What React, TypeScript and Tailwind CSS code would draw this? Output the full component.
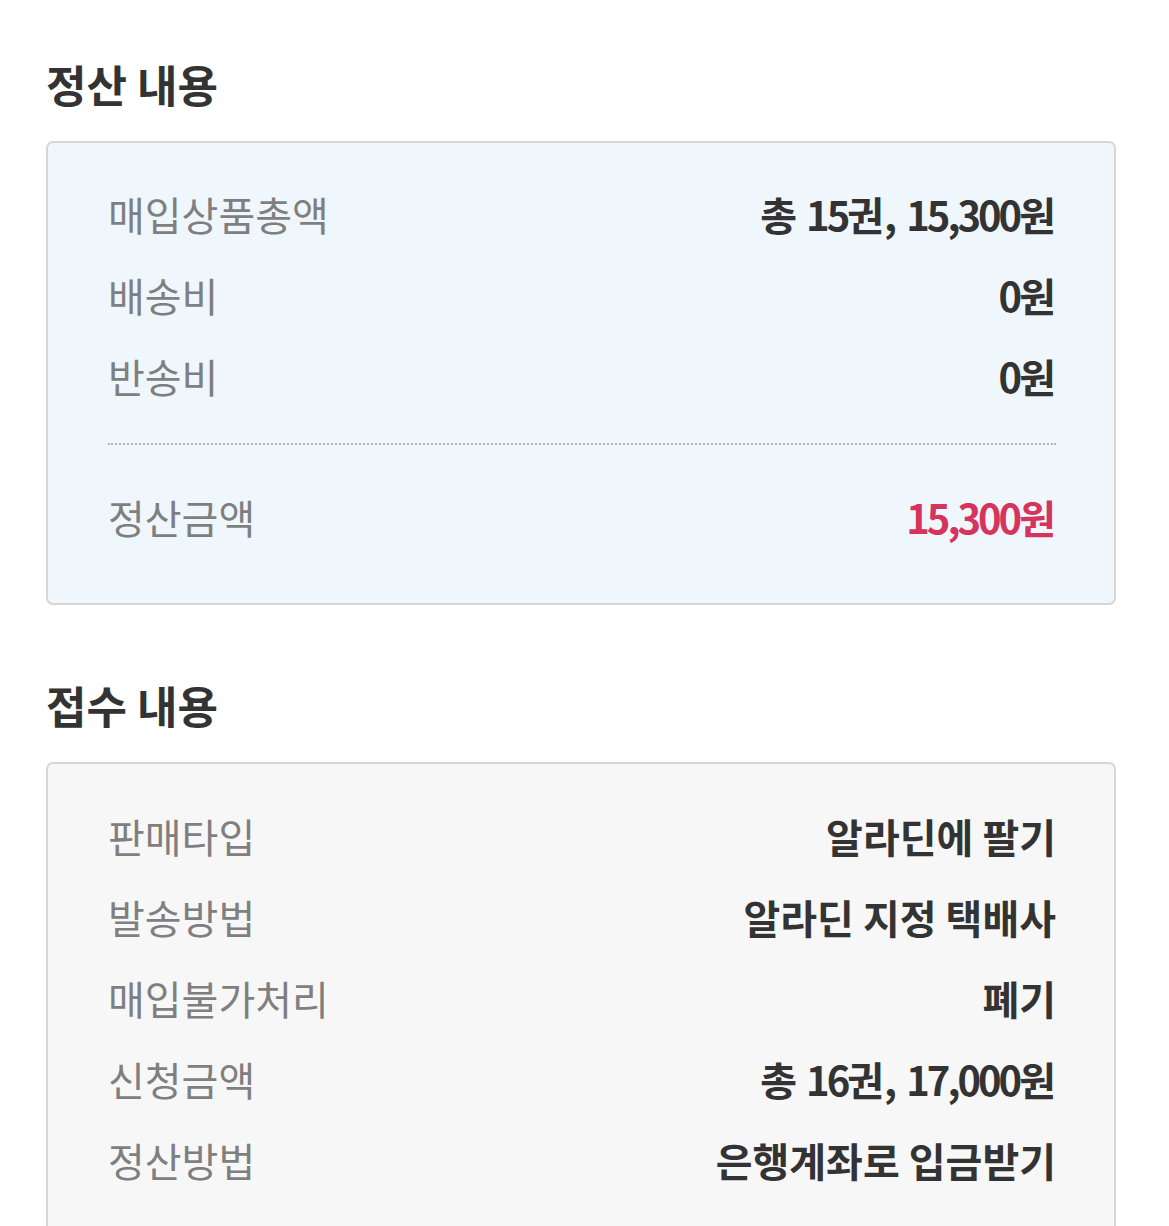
const font = { fontFamily: '"Noto Sans CJK KR", "Noto Sans", sans-serif' };

type Row = { label: string; value: string };

const settle: Row[] = [
  { label: '매입상품총액', value: '총 15권, 15,300원' },
  { label: '배송비', value: '0원' },
  { label: '반송비', value: '0원' },
];

const receipt: Row[] = [
  { label: '판매타입', value: '알라딘에 팔기' },
  { label: '발송방법', value: '알라딘 지정 택배사' },
  { label: '매입불가처리', value: '폐기' },
  { label: '신청금액', value: '총 16권, 17,000원' },
  { label: '정산방법', value: '은행계좌로 입금받기' },
];

// digits in the original font are narrow, so squeeze number runs a bit
function Amount({ text }: { text: string }) {
  return (
    <>
      {text.split(/([\d,]+)/).map((p, i) =>
        /\d/.test(p) ? (
          <span key={i} className="tracking-[-3px]">{p}</span>
        ) : (
          <span key={i}>{p}</span>
        )
      )}
    </>
  );
}

function Line({ label, value, red }: Row & { red?: boolean }) {
  return (
    <div className="flex h-[81px] items-center justify-between">
      <span className="text-[40px] text-[#7f7f7f]">{label}</span>
      <span className={'text-[40px] font-bold ' + (red ? 'text-[#d6335d]' : 'text-[#333]')}>
        <Amount text={value} />
      </span>
    </div>
  );
}

export default function App() {
  return (
    <div className="min-h-[1226px] bg-white pl-[46px] pr-[53px] pt-[52px]" style={font}>
      <h2 className="text-[44px] font-bold leading-[64px] text-[#333]">정산 내용</h2>
      <div className="mt-[25px] rounded-[7px] border-2 border-[#d6d6d6] bg-[#eff7fd] pl-[60px] pr-[58px] pt-[30px] pb-[46px]">
        {settle.map((r) => (
          <Line key={r.label} {...r} />
        ))}
        <div className="mt-[27px] mb-[31px] border-t-2 border-dotted border-[#b4b4b4]" />
        <Line label="정산금액" value="15,300원" red />
      </div>
      <h2 className="mt-[68px] text-[44px] font-bold leading-[64px] text-[#333]">접수 내용</h2>
      <div className="mt-[25px] rounded-[7px] border-2 border-[#d6d6d6] bg-[#f7f7f7] pl-[60px] pr-[58px] pt-[31px] pb-[44px]">
        {receipt.map((r) => (
          <Line key={r.label} {...r} />
        ))}
      </div>
    </div>
  );
}
